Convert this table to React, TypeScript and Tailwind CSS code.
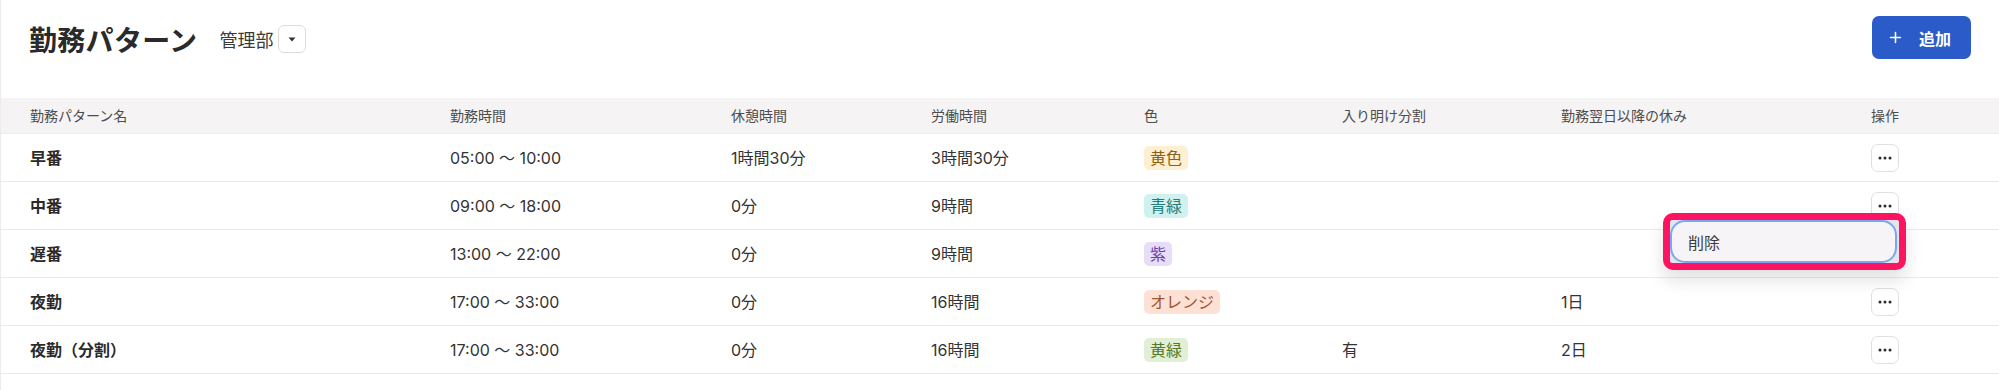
import React from "react";
import { Plus } from "lucide-react";

type Row = {
  name: string;
  time: string;
  rest: string;
  work: string;
  label: string;
  badge: string;
  split: string;
  off: string;
};

const rows: Row[] = [
  { name: "早番", time: "05:00 〜 10:00", rest: "1時間30分", work: "3時間30分", label: "黄色", badge: "bg-[#fdefd2] text-[#8f5f14]", split: "", off: "" },
  { name: "中番", time: "09:00 〜 18:00", rest: "0分", work: "9時間", label: "青緑", badge: "bg-[#cff1f0] text-[#267c7a]", split: "", off: "" },
  { name: "遅番", time: "13:00 〜 22:00", rest: "0分", work: "9時間", label: "紫", badge: "bg-[#e8ddf8] text-[#6b40a8]", split: "", off: "" },
  { name: "夜勤", time: "17:00 〜 33:00", rest: "0分", work: "16時間", label: "オレンジ", badge: "bg-[#fde1d5] text-[#a5532d]", split: "", off: "1日" },
  { name: "夜勤（分割）", time: "17:00 〜 33:00", rest: "0分", work: "16時間", label: "黄緑", badge: "bg-[#e1f0d4] text-[#52792f]", split: "有", off: "2日" },
];

const cols = "grid grid-cols-[420px_281px_200px_213px_198px_219px_310px_1fr] pl-[29px] items-center";

function Dots() {
  return (
    <svg width="14" height="4" viewBox="0 0 14 4" fill="#2a2a2a">
      <circle cx="2" cy="2" r="1.5" />
      <circle cx="7" cy="2" r="1.5" />
      <circle cx="12" cy="2" r="1.5" />
    </svg>
  );
}

export default function App() {
  return (
    <div className="relative w-full h-[390px] bg-white border-l border-[#ececec] font-['Noto_Sans_CJK_JP',sans-serif] text-[#333]">
      <div className="h-[98px] flex items-start justify-between pl-[28px] pr-[28px] pt-[16px]">
        <div className="flex items-center h-[46px]">
          <h1 className="text-[28px] font-bold text-[#2a2a2a] leading-none tracking-[0.3px]">勤務パターン</h1>
          <span className="ml-[22px] text-[18px] text-[#3a3a3a] leading-none">管理部</span>
          <button className="ml-[5px] w-[28px] h-[28px] rounded-[6px] border border-[#dcdcdc] bg-white flex items-center justify-center">
            <svg width="8" height="5" viewBox="0 0 8 5">
              <path d="M0.5 0.5 L7.5 0.5 L4 4.5 Z" fill="#333" />
            </svg>
          </button>
        </div>
        <button className="h-[43px] pl-[15px] pr-[20px] rounded-[7px] bg-[#2b5bc8] text-white flex items-center gap-[15px]">
          <Plus size={17} strokeWidth={2.2} />
          <span className="text-[16px] font-bold">追加</span>
        </button>
      </div>

      <div className={`${cols} h-[36px] bg-[#f5f3f4] text-[14px] text-[#4d4d4d] border-b border-[#ececec]`}>
        <div>勤務パターン名</div>
        <div>勤務時間</div>
        <div>休憩時間</div>
        <div>労働時間</div>
        <div>色</div>
        <div>入り明け分割</div>
        <div>勤務翌日以降の休み</div>
        <div>操作</div>
      </div>

      {rows.map((r) => (
        <div key={r.name} className={`${cols} h-[48px] border-b border-[#ebebeb] text-[16px] font-['Inter','Noto_Sans_CJK_JP',sans-serif]`}>
          <div className="font-bold text-[#2a2a2a]">{r.name}</div>
          <div>{r.time}</div>
          <div>{r.rest}</div>
          <div>{r.work}</div>
          <div>
            <span className={`inline-flex items-center h-[24px] px-[6px] rounded-[5px] ${r.badge}`}>{r.label}</span>
          </div>
          <div>{r.split}</div>
          <div>{r.off}</div>
          <div>
            <button className="w-[28px] h-[28px] rounded-[7px] border border-[#e0e0e0] bg-white flex items-center justify-center">
              <Dots />
            </button>
          </div>
        </div>
      ))}

      <div className="absolute left-[1662px] top-[213px] w-[243px] h-[57px] rounded-[10px] border-[7px] border-[#fb1462] bg-[#ebe9eb] shadow-[0_10px_18px_rgba(0,0,0,0.12)] overflow-hidden">
        <div className="h-full pr-[2px] bg-[#e6e4e6]">
          <div className="h-full rounded-[15px] border-2 border-[#79a6f6] bg-[#f6f4f6] flex items-center pl-[16px] text-[16px] text-[#3a3a3a]">
            削除
          </div>
        </div>
      </div>
    </div>
  );
}
